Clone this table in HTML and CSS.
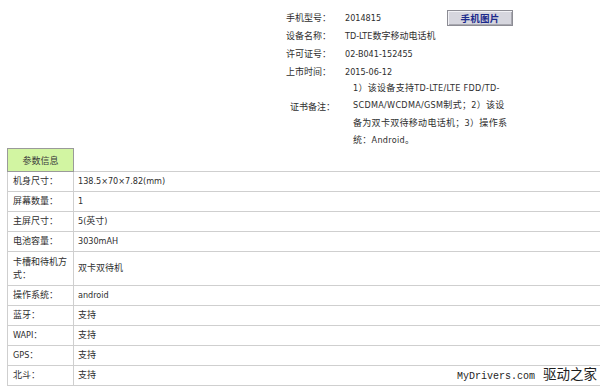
FILE: index.html
```html
<!DOCTYPE html>
<html lang="zh-CN">
<head>
<meta charset="utf-8">
<title>手机参数信息</title>
<link rel="stylesheet" href="styles.css">
</head>
<body>
<div class="page">
  <section class="info">
    <div class="info-row">
      <span class="info-label">手机型号：</span>
      <span class="info-value short">2014815</span>
      <button class="photo-btn" type="button">手机图片</button>
    </div>
    <div class="info-row">
      <span class="info-label">设备名称：</span>
      <span class="info-value">TD-LTE数字移动电话机</span>
    </div>
    <div class="info-row">
      <span class="info-label">许可证号：</span>
      <span class="info-value">02-B041-152455</span>
    </div>
    <div class="info-row">
      <span class="info-label">上市时间：</span>
      <span class="info-value">2015-06-12</span>
    </div>
    <div class="note-row">
      <span class="note-label">证书备注：</span>
      <p class="note-text">1）该设备支持TD-LTE/LTE FDD/TD-<br>SCDMA/WCDMA/GSM制式；2）该设<br>备为双卡双待移动电话机；3）操作系<br>统：Android。</p>
    </div>
  </section>

  <table class="params">
    <tr class="head-row">
      <th class="head-cell">参数信息</th>
      <td class="head-blank"></td>
    </tr>
    <tr><td class="key">机身尺寸：</td><td class="val">138.5×70×7.82(mm)</td></tr>
    <tr><td class="key">屏幕数量：</td><td class="val">1</td></tr>
    <tr><td class="key">主屏尺寸：</td><td class="val">5(英寸)</td></tr>
    <tr><td class="key">电池容量：</td><td class="val">3030mAH</td></tr>
    <tr class="tall"><td class="key">卡槽和待机方式：</td><td class="val">双卡双待机</td></tr>
    <tr><td class="key">操作系统：</td><td class="val">android</td></tr>
    <tr><td class="key">蓝牙：</td><td class="val">支持</td></tr>
    <tr><td class="key">WAPI：</td><td class="val">支持</td></tr>
    <tr><td class="key">GPS：</td><td class="val">支持</td></tr>
    <tr><td class="key">北斗：</td><td class="val">支持</td></tr>
  </table>

  <div class="watermark"><span class="wm-latin">MyDrivers.com</span><span class="wm-cjk">驱动之家</span></div>
</div>
</body>
</html>
```

FILE: styles.css
```css
html, body {
  margin: 0;
  padding: 0;
  background: #ffffff;
}

.page {
  position: relative;
  width: 600px;
  height: 389px;
  overflow: hidden;
  font-family: "DejaVu Sans Condensed", "DejaVu Sans", "Noto Sans CJK SC", sans-serif;
  font-size: 9px;
  color: #2e2e2e;
}

/* top information block */
.info {
  height: 148px;
  box-sizing: border-box;
  padding: 9px 0 0 286px;
}

.info-row {
  display: flex;
  align-items: center;
  height: 18px;
  line-height: 18px;
}

.info-label {
  width: 59px;
  flex: none;
}

.info-value.short {
  width: 102px;
}

.photo-btn {
  height: 16px;
  width: 66px;
  padding: 0;
  margin: 0;
  border: 1px solid #8c8c94;
  box-shadow: inset 1px 1px 0 #f2f2f6, inset -1px -1px 0 #a8a8b0;
  background: #d6d6de;
  color: #1c2a8c;
  font-family: "Noto Sans CJK SC", sans-serif;
  font-size: 9.5px;
  font-weight: bold;
  line-height: 14px;
  letter-spacing: 0.3px;
}

.note-row {
  display: flex;
  margin-top: -1px;
}

.note-label {
  width: 67px;
  flex: none;
  padding-left: 4px;
  box-sizing: border-box;
  margin-top: 18px;
  line-height: 18px;
}

.note-text {
  margin: 0;
  line-height: 17.4px;
  letter-spacing: 0.3px;
  white-space: nowrap;
}

/* parameter table */
.params {
  margin-left: 7px;
  width: 640px;
  border-collapse: collapse;
  table-layout: fixed;
}

.params td,
.params th {
  padding: 0 4px;
  text-align: left;
  font-weight: normal;
  vertical-align: middle;
}

.params tr {
  height: 20px;
}

.params tr.head-row {
  height: 23px;
}

.params tr.tall {
  height: 34px;
}

.params .head-cell {
  width: 66px;
  box-sizing: border-box;
  background: #d2f5a2;
  border: 1px solid #9a9a9a;
  text-align: center;
  color: #3a3a3a;
}

.head-blank {
  border: none;
  border-bottom: 1px solid #cfcfcf;
}

.key {
  border-left: 1px solid #cfcfcf;
  border-right: 1px solid #cfcfcf;
  border-bottom: 1px solid #cfcfcf;
  line-height: 13px;
}

.params .key {
  padding-left: 5px;
}

.val {
  border-bottom: 1px solid #cfcfcf;
  line-height: 13px;
}

/* watermark overlay */
.watermark {
  position: absolute;
  right: 3px;
  top: 363px;
  display: flex;
  align-items: baseline;
  gap: 8px;
  color: #1e1e1e;
  text-shadow: 0 0 2px #ffffff, 0 0 3px #ffffff;
}

.wm-latin {
  font-family: "Liberation Mono", monospace;
  font-size: 10px;
}

.wm-cjk {
  font-family: "Noto Sans CJK SC", sans-serif;
  font-size: 13.5px;
}
```
